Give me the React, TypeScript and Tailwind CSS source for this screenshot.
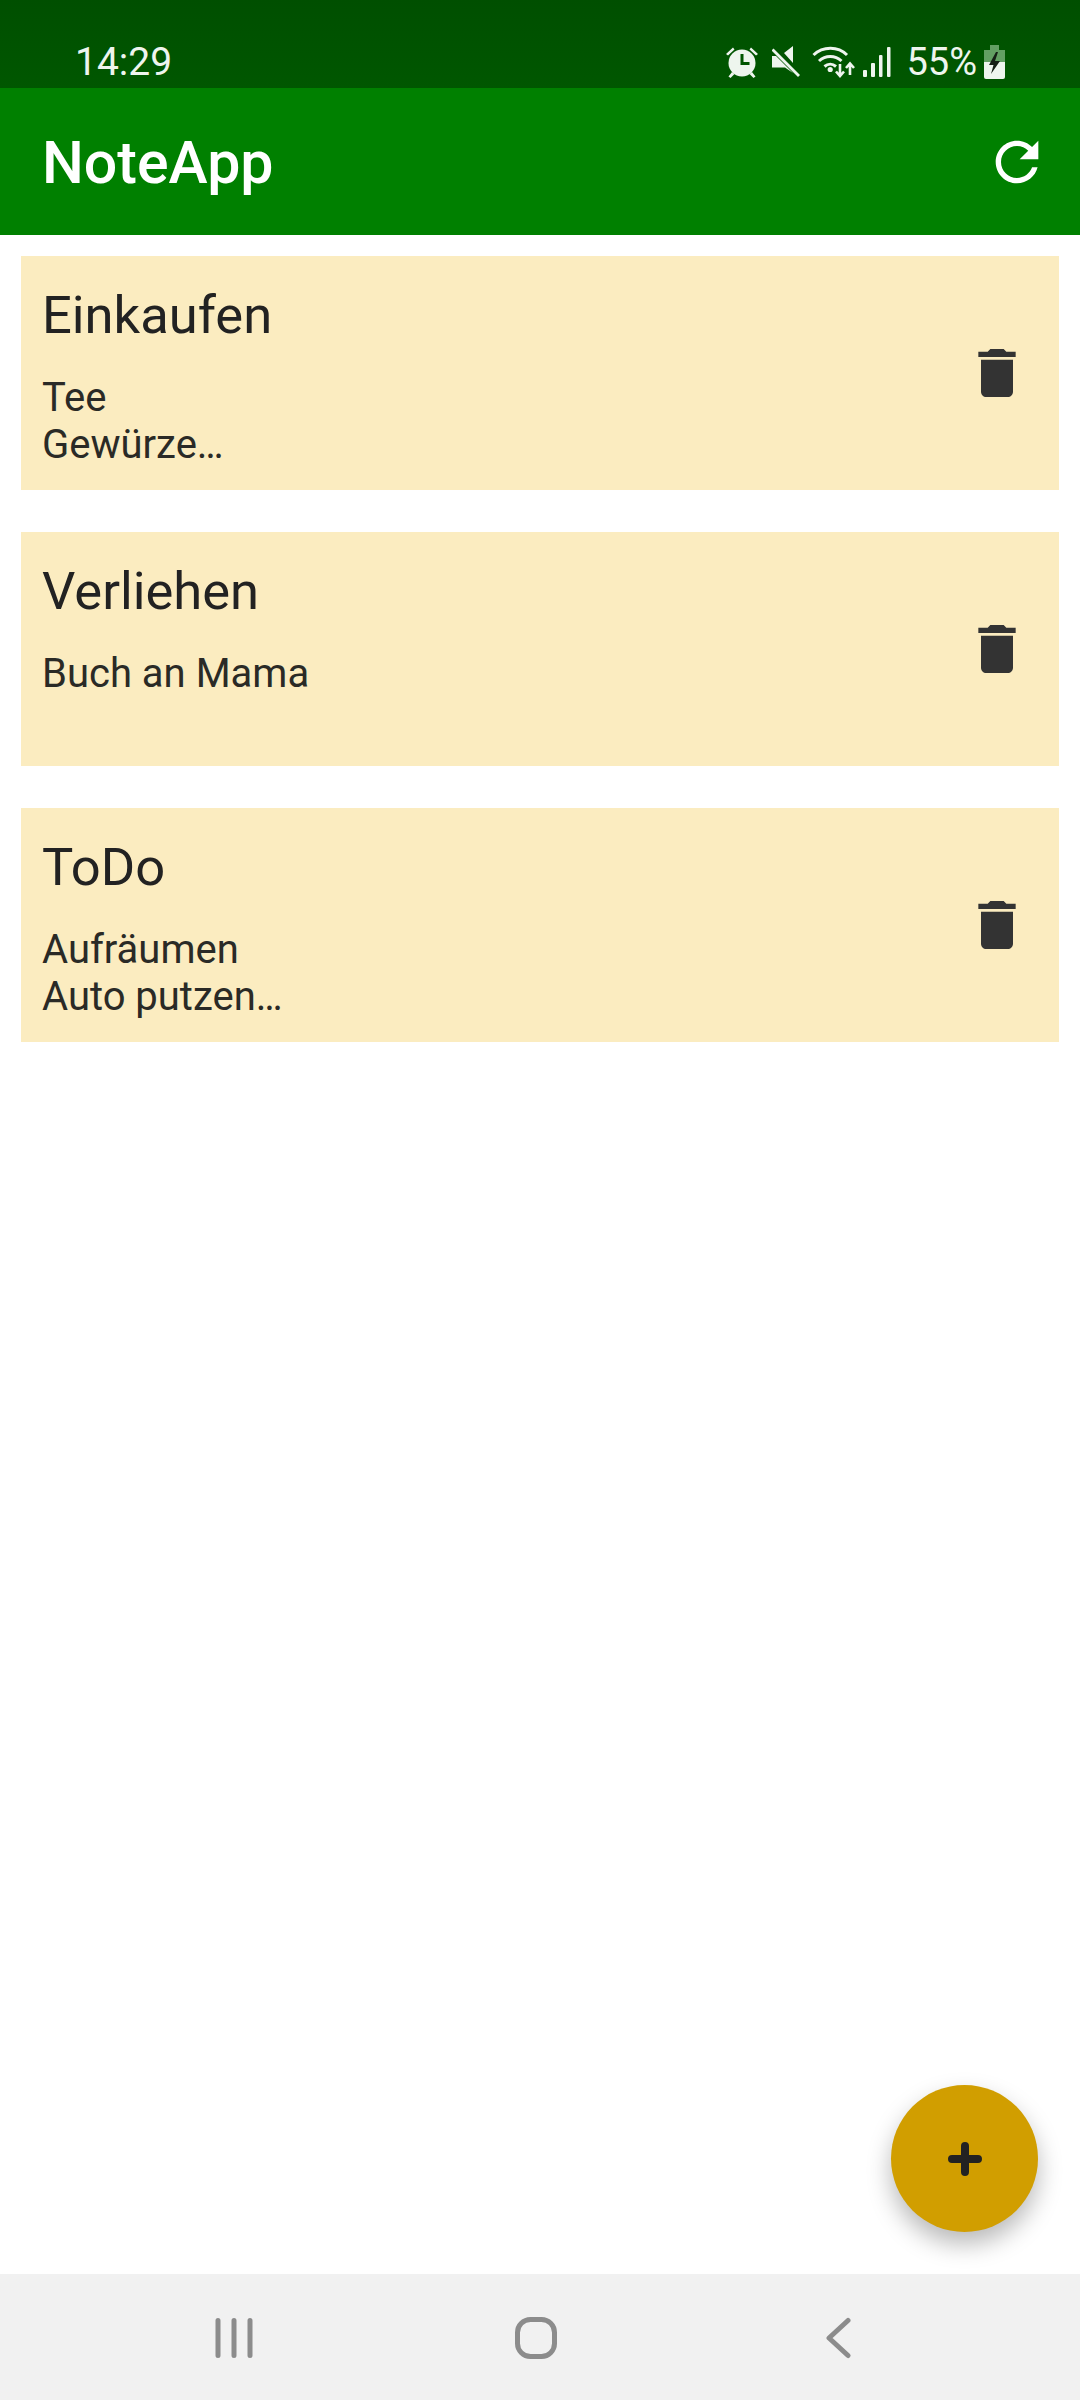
const notes = [
  { title: "Einkaufen", lines: ["Tee", "Gewürze…"] },
  { title: "Verliehen", lines: ["Buch an Mama"] },
  { title: "ToDo", lines: ["Aufräumen", "Auto putzen…"] },
];

function StatusIcons() {
  return (
    <div className="flex items-center text-[#eef5ee]">
      {/* alarm */}
      <svg width="34" height="34" viewBox="0 0 34 34" className="mr-[13px]" fill="currentColor">
        <circle cx="17" cy="18" r="13.5" />
        <path d="M1 9 8 2.500 9.500 4.500 3 10.500zM33 9 26 2.500 24.500 4.500 31 10.500z" />
        <path d="M7 27 3.500 31.500 5.500 33 9.500 29zM27 27 30.500 31.500 28.500 33 24.500 29z" />
        <path d="M15.500 9h3v8h6v3h-9z" fill="#005500" />
      </svg>
      {/* mute */}
      <svg width="30" height="32" viewBox="0 0 30 32" className="mr-[10px]" fill="currentColor">
        <path d="M0 10h4L21 27 13 21.500H0zM12 7 21 0v17z" />
        <path d="M1.500 2.500 28 29l-2 2L-.5 4.500z" />
      </svg>
      {/* wifi with data arrows */}
      <svg width="44" height="34" viewBox="0 0 44 34" className="mr-[7px]" fill="none" stroke="currentColor">
        <path d="M1.500 10C11 1 26 1 35 10" strokeWidth="3" />
        <path d="M7 16c6.500-6 16-6 22.500 0" strokeWidth="3" />
        <path d="M12.500 21.500c3.500-3 8-3 11.500 0" strokeWidth="3" />
        <circle cx="18.200" cy="24.500" r="2.600" fill="currentColor" stroke="none" />
        <path d="M28 19v11M24 26.500l4 4.500 4-4.500" strokeWidth="2.600" />
        <path d="M38 30V19M34 23l4-4.500 4 4.500" strokeWidth="2.600" />
      </svg>
      {/* signal */}
      <svg width="28" height="32" viewBox="0 0 28 32" className="mr-[15px]" fill="currentColor">
        <rect x="0" y="24" width="4" height="7" rx="1" />
        <rect x="8" y="17" width="4" height="14" rx="1" />
        <rect x="16" y="9" width="3.500" height="22" rx="1" />
        <rect x="24" y="1" width="3.500" height="30" rx="1" />
      </svg>
      <span className="mr-[7px] text-[38px] leading-[44px] font-['Roboto',sans-serif]">55%</span>
      {/* battery charging */}
      <svg width="21" height="34" viewBox="0 0 21 34" className="mr-[75px]">
        <path d="M6 0h9v5h6v14H0V5h6z" fill="#639f63" />
        <path d="M0 17h21v15a2 2 0 0 1-2 2H2a2 2 0 0 1-2-2z" fill="#eef5ee" />
        <path d="M12 7 5 20h4.500L7 29l9-13h-5l3-9z" fill="#151f15" />
      </svg>
    </div>
  );
}

function NoteCard({ title, lines }: { title: string; lines: string[] }) {
  return (
    <div className="flex h-[234px] items-center justify-between bg-[#fbecc0] pl-[21px] pr-[30px]">
      <div className="h-full min-w-0 pt-[29px]">
        <div className="text-[52.500px] leading-[60px] text-[#222222]">{title}</div>
        <div className="mt-[29px] text-[40px] leading-[47px] text-[#2a2a26]">
          {lines.map((line) => (
            <div key={line}>{line}</div>
          ))}
        </div>
      </div>
      <svg width="64" height="64" viewBox="0 0 24 24" fill="#333333">
        <path d="M6 19c0 1.100.9 2 2 2h8c1.100 0 2-.9 2-2V7H6v12zM19 4h-3.500l-1-1h-5l-1 1H5v2h14V4z" />
      </svg>
    </div>
  );
}

export default function App() {
  return (
    <div className="flex h-[2400px] w-[1080px] flex-col overflow-hidden bg-white font-['Roboto',sans-serif]">
      <div className="flex h-[88px] items-center justify-between bg-gradient-to-b from-[#004f00] to-[#005700] pl-[75px] pt-[36px] text-[#eef5ee]">
        <span className="text-[39px] leading-[44px]">14:29</span>
        <StatusIcons />
      </div>

      <div className="flex h-[147px] items-center justify-between bg-[#008000] pl-[42px] pr-[31px] pt-[3px] text-white">
        <h1 className="text-[59px] font-medium leading-[66px]">NoteApp</h1>
        <svg width="64" height="64" viewBox="0 0 24 24" fill="currentColor" className="-mt-[3px]">
          <path d="M17.650 6.350C16.200 4.900 14.210 4 12 4c-4.420 0-7.990 3.580-7.990 8s3.570 8 7.990 8c3.730 0 6.840-2.550 7.730-6h-2.080c-.82 2.330-3.040 4-5.650 4-3.310 0-6-2.690-6-6s2.690-6 6-6c1.660 0 3.140.69 4.220 1.780L13 11h7V4l-2.350 2.350z" />
        </svg>
      </div>

      <main className="relative flex-1">
        <div className="flex flex-col gap-[42px] pl-[21px] pr-[21px] pt-[21px]">
          {notes.map((note) => (
            <NoteCard key={note.title} title={note.title} lines={note.lines} />
          ))}
        </div>
        <button className="absolute bottom-[42px] right-[42px] flex h-[147px] w-[147px] items-center justify-center rounded-full bg-[#d19e00] shadow-[0_12px_24px_rgba(0,0,0,0.28)]">
          <svg width="36" height="36" viewBox="0 0 36 36" stroke="#222222" strokeWidth="8" strokeLinecap="round">
            <path d="M18 5v26M5 18h26" />
          </svg>
        </button>
      </main>

      <nav className="flex h-[126px] items-center bg-[#f1f1f1] pl-[213px] pt-[2px] text-[#8c8c8c]">
        <svg width="42" height="42" viewBox="0 0 42 42" fill="none" stroke="currentColor" strokeWidth="5" strokeLinecap="round" className="mr-[260px]">
          <path d="M5 3.500v35M21 3.500v35M37 3.500v35" />
        </svg>
        <svg width="42" height="42" viewBox="0 0 42 42" fill="none" stroke="currentColor" strokeWidth="5" className="mr-[268px]">
          <rect x="2.500" y="2.500" width="37" height="37" rx="13" />
        </svg>
        <svg width="27" height="42" viewBox="0 0 27 42" fill="none" stroke="currentColor" strokeWidth="5" strokeLinecap="round" strokeLinejoin="round">
          <path d="M23 3.500 4 21l19 17.500" />
        </svg>
      </nav>
    </div>
  );
}
